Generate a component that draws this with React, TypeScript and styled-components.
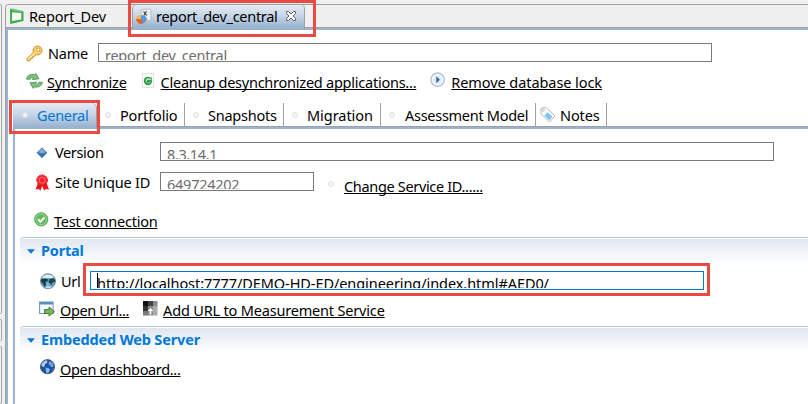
import React from "react";
import styled, { createGlobalStyle, css } from "styled-components";

const GRAY = "#a0a0a0";
const STEEL = "#99b4d1";
const RED = "#ea4a42";
const BLUE = "#0078d7";

const GlobalStyle = createGlobalStyle`
  * { box-sizing: border-box; }
  body { margin: 0; background: #f0f0f0; overflow: hidden; }
  svg { display: block; flex: none; }
`;

const Workbench = styled.div`
  display: flex;
  width: 808px;
  height: 404px;
  background: #f0f0f0;
  color: #000;
  font-family: "Noto Sans", sans-serif;
  font-size: 14.5px;
  line-height: 20px;
  white-space: pre;
`;

const SideStrip = styled.div`
  display: flex;
  flex-direction: column;
  gap: 5px;
  width: 5px;
  padding-top: 4px;
`;

const SidePane = styled.div<{ $h: number }>`
  flex: none;
  width: 2px;
  height: ${p => p.$h}px;
  border: solid ${GRAY};
  border-width: 1px 1px 1px 0;
  border-radius: 0 2px 2px 0;
  background: #f4f4f4;
`;

const Editor = styled.div`
  display: flex;
  flex-direction: column;
  flex: 1;
  min-width: 0;
  margin-top: 4px;
  border-left: 1px solid ${GRAY};
  border-top: 1px solid ${GRAY};
  border-top-left-radius: 4px;
`;

const EditorTabs = styled.div`
  display: flex;
  flex: none;
  height: 25px;
  border-top-left-radius: 3px;
  background: linear-gradient(#f0f0f0 22px, ${GRAY} 22px, ${GRAY} 23px, ${STEEL} 23px);
`;

const EditorTab = styled.div<{ $w: number; $active?: boolean }>`
  position: relative;
  display: flex;
  width: ${p => p.$w}px;
  padding: 1px 0 0 3px;
  ${p =>
    p.$active &&
    css`
      padding-left: 2px;
      border-left: 1px solid ${GRAY};
      border-right: 1px solid ${GRAY};
      border-radius: 4px 4px 0 0;
      background: linear-gradient(#e6ecf4, #c5d4e5 45%, ${STEEL} 90%);
    `}
`;

const EditorBody = styled.div`
  flex: 1;
  border-left: 2px solid ${STEEL};
  background: #fff;
`;

const Row = styled.div<{ $h: number; $left: number; $top?: number }>`
  display: flex;
  align-items: flex-start;
  height: ${p => p.$h}px;
  padding: ${p => p.$top ?? 0}px 0 0 ${p => p.$left}px;
`;

const IconSlot = styled.span<{ $w: number; $drop?: number }>`
  flex: none;
  width: ${p => p.$w}px;
  padding-top: ${p => p.$drop ?? 0}px;
`;

const Label = styled.span<{ $track?: number; $w?: number }>`
  flex: none;
  width: ${p => (p.$w ? `${p.$w}px` : "auto")};
  letter-spacing: ${p => p.$track ?? 0}px;
`;

const Link = styled.a<{ $track: number; $after?: number; $drop?: number }>`
  flex: none;
  margin: ${p => p.$drop ?? 0}px ${p => p.$after ?? 0}px 0 0;
  letter-spacing: ${p => p.$track}px;
  text-decoration: underline;
  text-decoration-thickness: 1px;
  text-decoration-skip-ink: none;
  text-underline-offset: 1px;
`;

const Field = styled.div<{ $w: number; $focus?: boolean; $track: number }>`
  display: flex;
  flex: none;
  width: ${p => p.$w}px;
  height: 19px;
  padding: 1px 0 0 6px;
  border: 1px solid ${p => (p.$focus ? BLUE : "#7a7a7a")};
  color: ${p => (p.$focus ? "#000" : "#6d6d6d")};
  letter-spacing: ${p => p.$track}px;
`;

const FieldText = styled.span`
  height: 15px;
  overflow: hidden;
`;

const Caret = styled.span`
  width: 1px;
  height: 15px;
  margin-right: -1px;
  background: #000;
`;

const FormTabs = styled.div`
  display: flex;
  height: 26px;
  margin-left: 5px;
  background: linear-gradient(#fff 23px, ${GRAY} 23px, ${GRAY} 24px, ${STEEL} 24px);
`;

const FormTab = styled.div<{ $w: number; $pad: number; $active?: boolean }>`
  position: relative;
  display: flex;
  width: ${p => p.$w}px;
  padding: 2px 0 0 ${p => p.$pad}px;
  background: linear-gradient(${GRAY}, ${GRAY}) right top / 1px 23px no-repeat;
  ${p =>
    p.$active &&
    css`
      color: ${BLUE};
      border-right: 1px solid ${GRAY};
      border-top-right-radius: 5px;
      background: linear-gradient(#e4ebf3, #c6d5e6 45%, ${STEEL} 92%);
    `}
`;

const FormPage = styled.div`
  height: 275px;
  margin-left: 5px;
  border-left: 2px solid ${STEEL};
`;

const SectionHead = styled.div`
  display: flex;
  height: 27px;
  margin-left: 5px;
  padding: 2px 0 0 7px;
  border-top: 1px solid #b4c7dc;
  border-top-left-radius: 4px;
  color: ${BLUE};
  font-weight: 700;
  background: linear-gradient(#fff 1px, #e0e7f1 1px, #fff 26px);
`;

const Dot = styled.div`
  width: 6px;
  height: 6px;
  border: 1px solid #dedede;
  border-radius: 50%;
  background: #f5f5f5;
`;

const Highlight = styled.div<{ $x: number; $y: number; $w: number; $h: number }>`
  position: absolute;
  z-index: 2;
  left: ${p => p.$x}px;
  top: ${p => p.$y}px;
  width: ${p => p.$w}px;
  height: ${p => p.$h}px;
  border: 3px solid ${RED};
`;

const Focused = styled.div`
  position: relative;
`;

const GreenPage = () => (
  <svg width="16" height="17" viewBox="0 0 16 17">
    <path d="M1 1 3 .6 14 2.900 14.500 3.200V13L1.200 16Z" fill="#43a84b" />
    <path d="M3.200 4.200 12.300 5v6.600L3 13Z" fill="#f4fbf3" />
    <path d="M2.500 1.500 13.500 3.600" stroke="#9bdc96" strokeWidth="1" />
  </svg>
);

const ReportIcon = () => (
  <svg width="17" height="17" viewBox="0 0 17 17">
    <path d="M6 1.800 14.500.8 16 2v10l-8 1.500L6 12Z" fill="#ececec" stroke="#b4b4b4" strokeWidth=".8" />
    <path d="m8.500 3.500 3.300 4M11.500 3.200 8.800 7.500" stroke="#333" strokeWidth="1.100" />
    <path d="M1 10a5.200 4.500 0 0 1 5-3v4Z" fill="#ffb45a" />
    <path d="M1 10.500 6.500 11 11.500 9.500a5 5 0 0 1-5 6.500C3 16 1 13.500 1 10.500Z" fill="#f58a35" />
    <path d="M6 7.200c3-.3 5.600 1 5.800 4.300L7.500 16 6 11.500Z" fill="#4b9be6" />
    <path d="m1.300 11 5 .4 1.100 4.200C4 16.400 1.500 14 1.300 11Z" fill="#ef5a22" />
  </svg>
);

const CloseIcon = () => (
  <svg width="12" height="12" viewBox="0 0 12 12">
    <path
      d="M1.500 1.500h2L6 4l2.500-2.500h2v2L8 6l2.500 2.500v2h-2L6 8l-2.500 2.500h-2v-2L4 6 1.500 3.500Z"
      fill="#fff"
      stroke="#5c6064"
      strokeWidth="1"
    />
  </svg>
);

const KeyIcon = () => (
  <svg width="17" height="17" viewBox="0 0 17 17">
    <path
      d="M1 13.500 7.300 7.500C6.500 4 8.500 1.200 11.500 1c2.700 0 4.600 2 4.500 4.500 0 3-2.800 5-6 4.200l-1.500 1.500-1.600.2-.2 1.800-1.800.2-.3 1.800L2.300 16 1 15.300Z"
      fill="#f8cf68"
      stroke="#c8922e"
      strokeWidth="1"
    />
    <circle cx="12.300" cy="4.700" r="1.500" fill="#fff" stroke="#c8922e" strokeWidth=".8" />
    <path d="m2.500 14 6-5.800" stroke="#fff0b8" strokeWidth="1.100" />
  </svg>
);

const SyncIcon = () => (
  <svg width="17" height="16" viewBox="0 0 17 16">
    <g fill="#7fbe7b" stroke="#4a9150" strokeWidth=".8" strokeLinejoin="round">
      <path d="M.6 6.200C1 2.400 4.500.7 8.800 1.600l1-1.200 3.200 5.400-6.800.8 1.300-1.900C5.700 4.100 4.500 4.700 4.200 6.200Z" />
      <path d="M16.400 9.300c-.4 3.800-4 5.500-8.200 4.600l-1 1.500L3.900 9.800l6.700-.7-1.200 1.800c1.800.6 3 .1 3.300-1.600Z" />
    </g>
  </svg>
);

const CleanupIcon = () => (
  <svg width="13" height="16" viewBox="0 0 13 16">
    <rect x=".5" y=".5" width="11" height="14" fill="#fbfdfb" stroke="#dde4dd" />
    <circle cx="6" cy="8" r="4.200" fill="#2f9a46" />
    <path d="M9.500 6.500 6.500 6A2 2 0 0 0 4.300 8.500" fill="none" stroke="#c9efce" strokeWidth="1.300" />
    <path d="M4.500 9.500C6 10.500 8 10 8.800 8.300" fill="none" stroke="#8fd89b" strokeWidth="1" />
    <path d="m7 5.500 3-1.500v3Z" fill="#55b865" />
  </svg>
);

const PlayIcon = () => (
  <svg width="16" height="16" viewBox="0 0 16 16">
    <circle cx="7.600" cy="7.700" r="6.700" fill="#e3eefa" stroke="#b4c0d2" strokeWidth="1.300" />
    <circle cx="7.600" cy="7.700" r="5.200" fill="none" stroke="#fff" strokeWidth="1" />
    <path d="m6.300 4.300 3.500 3.400-3.500 3.500Z" fill="#2467b2" />
  </svg>
);

const TagIcon = () => (
  <svg width="16" height="16" viewBox="0 0 16 16">
    <path d="M.8 2 2 .8h4.500L15 9l-5.500 6L1 6.800Z" fill="#fbfbfb" stroke="#b4b8bc" />
    <circle cx="3.300" cy="3.300" r="1.100" fill="#fff" stroke="#aaa" strokeWidth=".7" />
    <path d="m7.500 5.200 5 4.600-3.300 3.400-4.800-4.600Z" fill="#7cc3f0" />
  </svg>
);

const DiamondIcon = () => (
  <svg width="12" height="12" viewBox="0 0 12 12">
    <path d="m6 .5 5.300 5.300L6 11.200.6 5.800Z" fill="#3a74ab" />
    <path d="M6 1.400 10 5.300 6 6.300 2 5.300Z" fill="#7fb0dc" />
  </svg>
);

const RibbonIcon = () => (
  <svg width="15" height="17" viewBox="0 0 15 17">
    <path d="m3 9-2.500 6.500 3-.4L5.500 16.500 7.200 12l2 4.500 1.900-1.400 2.900.3L11.500 9Z" fill="#e8151d" />
    <circle cx="7.100" cy="6.200" r="5.300" fill="#f3232b" />
    <circle cx="7.100" cy="6.200" r="5.400" fill="none" stroke="#e8151d" strokeWidth="1" strokeDasharray="1.700 .7" />
    <circle cx="7.100" cy="6.200" r="3" fill="none" stroke="#fb7a7e" strokeWidth=".9" />
  </svg>
);

const CheckIcon = () => (
  <svg width="15" height="15" viewBox="0 0 15 15">
    <circle cx="7.200" cy="7.300" r="6.600" fill="#62b95b" stroke="#5aa25c" />
    <circle cx="7.200" cy="7.300" r="5.400" fill="none" stroke="#a5d99f" strokeWidth=".9" />
    <path d="m4.200 7.300 2.300 2.400 4-4.400" fill="none" stroke="#fff" strokeWidth="2" />
  </svg>
);

const TwistieIcon = () => (
  <svg width="8" height="5" viewBox="0 0 8 5">
    <path d="M0 .3h8L4 4.700Z" fill={BLUE} />
  </svg>
);

const EarthIcon = () => (
  <svg width="17" height="17" viewBox="0 0 17 17">
    <circle cx="8" cy="8.200" r="7.500" fill="#6f9dc6" stroke="#62798f" strokeWidth=".8" />
    <path d="M2 4.500C4 .9 11 .2 14 4.200L12 5 4 5.200Z" fill="#dcecf5" />
    <path d="M1.200 6.200 5 5.500l3 .8-.5 2-2 .8.4 2.800-1.200 2L3 10.500 1 8.500Z" fill="#143f3c" />
    <path d="m9 6.500 3.500-1.300 2.800 1.500-.4 2.300-2.400.4-1 2.600-1.500-1.800-1.300-.7Z" fill="#174a47" />
    <path d="M5 14c2-1.200 5-1.200 7 0-2 1.800-5 1.800-7 0Z" fill="#b9dcec" />
    <path d="M7 9.500 9 11 8 13 6.500 12Z" fill="#6fd0e6" />
  </svg>
);

const OpenUrlIcon = () => (
  <svg width="17" height="16" viewBox="0 0 17 16">
    <rect x=".6" y="1" width="13.500" height="11.500" fill="#f5faff" stroke="#7793ad" />
    <path d="M.6 1h13.500v2.500H.6Z" fill="#5b8fc2" />
    <path d="M5.500 8.600H10V6l5.500 4.600-5.500 4.500v-2.600H5.500Z" fill="#7cb65c" stroke="#35752e" strokeWidth=".9" />
  </svg>
);

const GridIcon = () => (
  <svg width="15" height="15" viewBox="0 0 15 15">
    <rect width="5" height="5" fill="#111" />
    <rect x="5" width="5" height="5" fill="#444" />
    <rect x="10" width="4.500" height="5" fill="#8a8a8a" />
    <rect y="5" width="5" height="5" fill="#333" />
    <rect x="5" y="5" width="5" height="9.500" fill="#8c8c8c" />
    <rect x="10" y="5" width="4.500" height="9.500" fill="#aaa" />
    <rect y="10" width="5" height="4.500" fill="#777" />
    <path d="m7.500 7 3 3H8.300v3.500H6.700V10H4.500Z" fill="#fff" />
  </svg>
);

const GlobeIcon = () => (
  <svg width="16" height="16" viewBox="0 0 16 16">
    <circle cx="7.500" cy="7.700" r="7.100" fill="#1f4f9d" stroke="#26405f" strokeWidth=".7" />
    <path d="M2 4 5.500 1.200l2 .6L7 4 5 5l-.4 2.500L3 8 1.200 6.500Z" fill="#a9cdf3" />
    <path d="m9.500 2 3 1.500 1.500 3.800-2.500 1L10 6.500 8.300 5Z" fill="#6ba2e0" />
    <path d="m5.500 8.500 3.500.7 1 2L8 14.200l-1.800-.5Z" fill="#86b8ee" />
    <path d="M12.500 9.800 13.800 9l-1.300 3Z" fill="#5c90cf" />
  </svg>
);

const dotTabs = [
  { name: "Portfolio", w: 88, slot: 15, track: -0.15 },
  { name: "Snapshots", w: 99, slot: 15, track: -0.25 },
  { name: "Migration", w: 97, slot: 15, track: -0.05 },
  { name: "Assessment Model", w: 155, slot: 16, track: -0.28 },
];

export default function App() {
  return (
    <>
      <GlobalStyle />
      <Workbench>
        <SideStrip>
          <SidePane $h={310} />
          <SidePane $h={22} />
          <SidePane $h={58} />
        </SideStrip>
        <Editor>
          <EditorTabs>
            <EditorTab $w={126}>
              <IconSlot $w={20} $drop={2}><GreenPage /></IconSlot>
              <Label $track={-0.15}>Report_Dev</Label>
            </EditorTab>
            <EditorTab $w={173} $active>
              <IconSlot $w={21} $drop={2}><ReportIcon /></IconSlot>
              <Label $track={-0.29} $w={129}>report_dev_central</Label>
              <IconSlot $w={12} $drop={4}><CloseIcon /></IconSlot>
              <Highlight $x={-5} $y={-5} $w={188} $h={37} />
            </EditorTab>
          </EditorTabs>
          <EditorBody>
            <Row $h={41} $left={18} $top={13}>
              <IconSlot $w={22} $drop={2}><KeyIcon /></IconSlot>
              <Label $w={50} $track={-0.25}>Name</Label>
              <Field $w={614} $track={-0.27}><FieldText>report_dev_central</FieldText></Field>
            </Row>
            <Row $h={32} $left={18} $top={1}>
              <IconSlot $w={21} $drop={1}><SyncIcon /></IconSlot>
              <Link $track={-0.26} $after={15}>Synchronize</Link>
              <IconSlot $w={19} $drop={1}><CleanupIcon /></IconSlot>
              <Link $track={-0.24} $after={14}>Cleanup desynchronized applications...</Link>
              <IconSlot $w={21}><PlayIcon /></IconSlot>
              <Link $track={-0.07}>Remove database lock</Link>
            </Row>
            <FormTabs>
              <FormTab $w={84} $pad={9} $active>
                <IconSlot $w={15} $drop={7}><Dot /></IconSlot>
                <Label $track={-0.3}>General</Label>
                <Highlight $x={-4} $y={-3} $w={91} $h={34} />
              </FormTab>
              {dotTabs.map(t => (
                <FormTab key={t.name} $w={t.w} $pad={8}>
                  <IconSlot $w={t.slot} $drop={7}><Dot /></IconSlot>
                  <Label $track={t.track}>{t.name}</Label>
                </FormTab>
              ))}
              <FormTab $w={71} $pad={4}>
                <IconSlot $w={20} $drop={2}><TagIcon /></IconSlot>
                <Label $track={-0.1}>Notes</Label>
              </FormTab>
            </FormTabs>
            <FormPage>
              <Row $h={43} $left={21} $top={13}>
                <IconSlot $w={19} $drop={5}><DiamondIcon /></IconSlot>
                <Label $w={105} $track={-0.36}>Version</Label>
                <Field $w={614} $track={-0.38}><FieldText>8.3.14.1</FieldText></Field>
              </Row>
              <Row $h={39} $left={20}>
                <IconSlot $w={20} $drop={2}><RibbonIcon /></IconSlot>
                <Label $w={105} $track={-0.16}>Site Unique ID</Label>
                <Field $w={154} $track={-0.25}><FieldText>649724202</FieldText></Field>
                <Row $h={15} $left={14} $top={9}><Dot /></Row>
                <Row $h={24} $left={10} $top={4}><Link $track={-0.33}>Change Service ID......</Link></Row>
              </Row>
              <Row $h={26} $left={19}>
                <IconSlot $w={20} $drop={1}><CheckIcon /></IconSlot>
                <Link $track={-0.21}>Test connection</Link>
              </Row>
              <SectionHead>
                <IconSlot $w={14} $drop={9}><TwistieIcon /></IconSlot>
                <Label $track={-0.22}>Portal</Label>
              </SectionHead>
              <Focused>
                <Row $h={36} $left={25} $top={7}>
                  <IconSlot $w={21} $drop={2}><EarthIcon /></IconSlot>
                  <Label $w={29} $track={-0.35}>Url</Label>
                  <Field $w={614} $focus $track={-0.07}>
                    <Caret />
                    <FieldText>http://localhost:7777/DEMO-HD-ED/engineering/index.html#AED0/</FieldText>
                  </Field>
                </Row>
                <Highlight $x={68} $y={-1} $w={627} $h={33} />
              </Focused>
              <Row $h={26} $left={24}>
                <IconSlot $w={21} $drop={1}><OpenUrlIcon /></IconSlot>
                <Link $track={-0.37} $after={14}>Open Url...</Link>
                <IconSlot $w={20} $drop={1}><GridIcon /></IconSlot>
                <Link $track={-0.18}>Add URL to Measurement Service</Link>
              </Row>
              <SectionHead>
                <IconSlot $w={14} $drop={9}><TwistieIcon /></IconSlot>
                <Label $track={-0.15}>Embedded Web Server</Label>
              </SectionHead>
              <Row $h={40} $left={25} $top={6}>
                <IconSlot $w={20}><GlobeIcon /></IconSlot>
                <Link $track={-0.34}>Open dashboard...</Link>
              </Row>
            </FormPage>
          </EditorBody>
        </Editor>
      </Workbench>
    </>
  );
}
